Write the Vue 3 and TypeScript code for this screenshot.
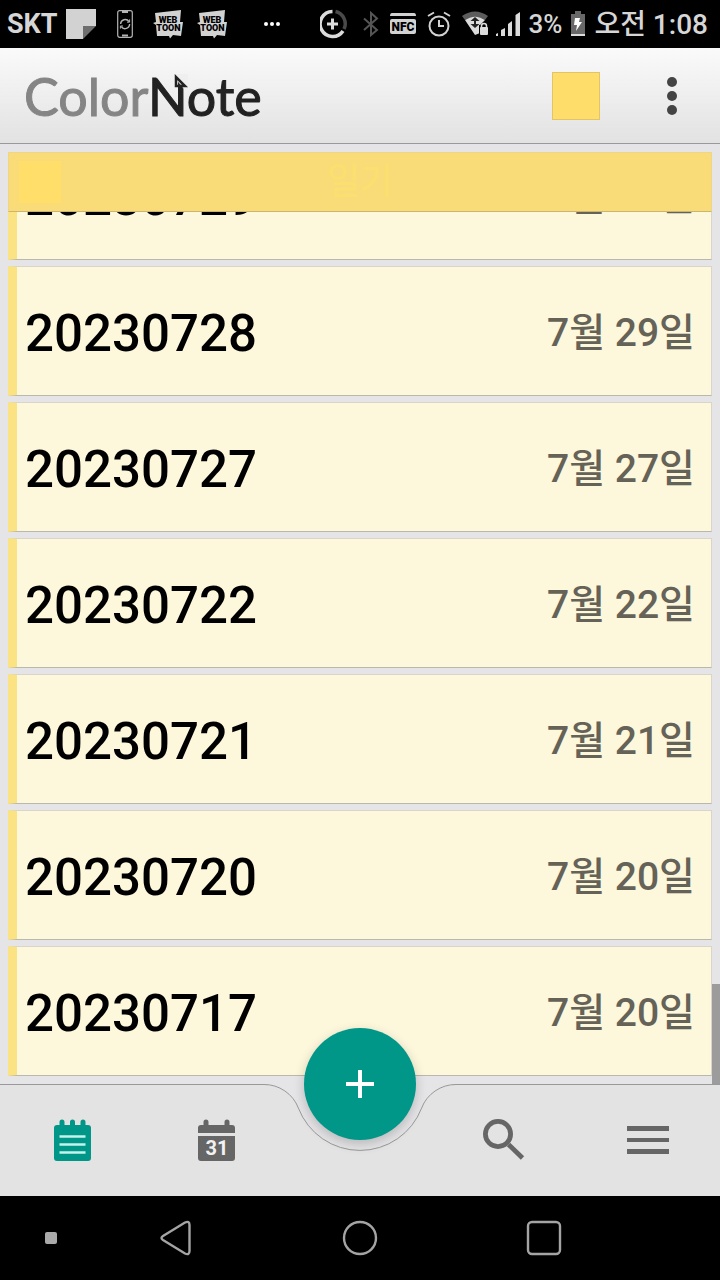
<script setup lang="ts">
interface Note {
  title: string
  date: string
}

const carrier = 'SKT'
const battery = '3%'
const clock = '오전 1:08'
const category = '일기'

const notes: Note[] = [
  { title: '20230729', date: '7월 31일' },
  { title: '20230728', date: '7월 29일' },
  { title: '20230727', date: '7월 27일' },
  { title: '20230722', date: '7월 22일' },
  { title: '20230721', date: '7월 21일' },
  { title: '20230720', date: '7월 20일' },
  { title: '20230717', date: '7월 20일' },
]
</script>

<template>
  <div class="screen">
    <div class="status">
      <div class="status-left">
        <span class="carrier">{{ carrier }}</span>
        <svg width="30" height="30" viewBox="0 0 30 30" aria-hidden="true">
          <path d="M0 0H30V17H17V30H0Z" fill="#d2d2d2" />
          <path d="M17 17H30L17 30Z" fill="#6e6e6e" />
        </svg>
        <svg class="phone" width="16" height="28" viewBox="0 0 16 28" fill="none" stroke="#b4b4b4" aria-hidden="true">
          <rect x="0.7" y="0.7" width="14.6" height="26.6" rx="2" stroke-width="1.2" />
          <path d="M5 2H11M5 25.5H11" stroke-width="1.8" />
          <path d="M3.6 14A4.6 4.6 0 0 1 12 11.6M12.6 14A4.6 4.6 0 0 1 4.2 16.6" stroke-width="1.4" />
          <path d="M12.6 9.4V12.2H10M3.4 18.6V16H6" stroke-width="1" />
        </svg>
        <svg v-for="n in 2" :key="n" class="webtoon" width="30" height="30" viewBox="0 0 30 30" aria-hidden="true">
          <path d="M2 4L28 1L27 13L30 13L28 27L20 26L17 29.500L16 27L4 27L3 16L0 14L3 13Z" fill="#d2d2d2" />
          <text x="15" y="14" class="toon-text">WEB</text>
          <text x="15.500" y="22" class="toon-text">TOON</text>
        </svg>
        <svg class="dots" width="18" height="6" viewBox="0 0 18 6" fill="#fff" aria-hidden="true">
          <circle cx="3" cy="3" r="2" /><circle cx="9" cy="3" r="2" /><circle cx="15" cy="3" r="2" />
        </svg>
      </div>
      <div class="status-right">
        <svg width="32" height="30" viewBox="0 0 32 30" fill="none" aria-hidden="true">
          <path d="M15.500 2.500A12.500 12.500 0 0 1 24 20" stroke="#4a4a4a" stroke-width="3.500" />
          <path d="M12.500 2.500A12.500 12.500 0 1 0 23 22" stroke="#dcdcdc" stroke-width="3.500" />
          <path d="M12.500 9.500V20.500M7 15H18" stroke="#dcdcdc" stroke-width="3" />
        </svg>
        <svg width="16" height="26" viewBox="0 0 16 26" fill="none" stroke="#555" stroke-width="2" aria-hidden="true">
          <path d="M1 7.500L14 19L8 24V2L14 7.500L1 19" />
        </svg>
        <svg width="26" height="22" viewBox="0 0 26 22" aria-hidden="true">
          <path d="M2 0H24Q26 0 26 3H0Q0 0 2 0Z" fill="#d2d2d2" />
          <rect y="6" width="26" height="15" rx="2" fill="#d2d2d2" />
          <text x="13" y="18" class="nfc-text">NFC</text>
        </svg>
        <svg width="24" height="26" viewBox="0 0 24 26" fill="none" stroke="#d2d2d2" stroke-width="2" aria-hidden="true">
          <circle cx="12" cy="15" r="9.500" />
          <path d="M12 9V15H17M1 5L7 1.500M23 5L17 1.500" />
        </svg>
        <div class="signals">
          <svg width="26" height="26" viewBox="0 0 26 26" aria-hidden="true">
            <path d="M0 5Q13 -4 26 5L23 9Q13 2 3 9Z" fill="#5c5c5c" />
            <path d="M3 9Q13 2 23 9L18 14V22L13 24Z" fill="#dcdcdc" />
            <path d="M8.500 10L13 6L17.500 10H14V13H17.500L13 17L8.500 13H12V10Z" fill="#222" />
            <path d="M17 14H26V26H17Z" fill="#000" />
            <rect x="18" y="16" width="8" height="8" rx="1" fill="#dcdcdc" />
            <path d="M19.500 17V15Q19.500 12.500 22 12.500T24.500 15V17" fill="none" stroke="#dcdcdc" stroke-width="1.500" />
          </svg>
          <svg width="24" height="24" viewBox="0 0 24 24" fill="#dcdcdc" aria-hidden="true">
            <path d="M0 24V22L2 21V24ZM5 24V18L9 16V24ZM12 24V12L16 9V24ZM19.500 24V3L24 0V24Z" />
          </svg>
          <span class="percent">{{ battery }}</span>
          <svg width="16" height="26" viewBox="0 0 16 26" aria-hidden="true">
            <path d="M5 0H11V3H15V23H1V3H5Z" fill="#686868" />
            <rect x="1" y="23" width="14" height="2" fill="#ddd" />
            <path d="M5 7H10L9 11H12L6 20L7 14H4Z" fill="#fff" />
          </svg>
          <span class="clock">{{ clock }}</span>
        </div>
      </div>
    </div>

    <header class="toolbar">
      <h1 class="logo">
        <span class="color">Color</span><span class="note">Note</span>
        <svg class="fold" width="14" height="16" viewBox="0 0 14 16" aria-hidden="true">
          <path d="M0 0H14V15H10L0 3Z" fill="#efefef" />
          <path d="M2 3V12H11Z" fill="none" stroke="#222" stroke-width="2.500" />
        </svg>
      </h1>
      <button class="swatch" type="button" aria-label="Color"></button>
      <button class="more" type="button" aria-label="More options">
        <svg width="12" height="40" viewBox="0 0 12 40" fill="#444" aria-hidden="true">
          <circle cx="6" cy="6" r="5" /><circle cx="6" cy="20" r="5" /><circle cx="6" cy="34" r="5" />
        </svg>
      </button>
    </header>

    <main class="content">
      <h2 class="category"><span class="chip"></span><span class="category-name">{{ category }}</span></h2>
      <ul class="notes">
        <li v-for="note in notes" :key="note.title">
          <button class="row" type="button">
            <span class="title">{{ note.title }}</span>
            <span class="date">{{ note.date }}</span>
          </button>
        </li>
      </ul>
      <div class="thumb"></div>
    </main>

    <nav class="tabs">
      <svg class="notch" width="192" height="68" viewBox="0 0 192 68" aria-hidden="true">
        <path d="M0 0V0.500A36.800 36.800 0 0 1 34.400 24.100A66 66 0 0 0 157.600 24.100A36.800 36.800 0 0 1 192 0.500V0Z" fill="#e5e5e7" />
        <path d="M0 0.500A36.800 36.800 0 0 1 34.400 24.100A66 66 0 0 0 157.600 24.100A36.800 36.800 0 0 1 192 0.500" fill="none" stroke="#999" />
      </svg>
      <button type="button" aria-label="Notes">
        <svg width="38" height="44" viewBox="-1 -1 38 44" aria-hidden="true">
          <rect y="6" width="37" height="36" rx="3" fill="#009688" />
          <path d="M8 3V9M18.500 3V9M29 3V9" stroke="#009688" stroke-width="5" stroke-linecap="round" />
          <path d="M5.500 17.500H31.500M5.500 25.500H31.500M5.500 33.500H31.500" stroke="#c4f3ed" stroke-width="2.600" />
        </svg>
      </button>
      <button type="button" aria-label="Calendar">
        <svg width="38" height="44" viewBox="-1 -1 38 44" aria-hidden="true">
          <path d="M0 14V9Q0 6 3 6H34Q37 6 37 9V14ZM0 17H37V39Q37 42 34 42H3Q0 42 0 39Z" fill="#666" />
          <path d="M8 3V9M29 3V9" stroke="#666" stroke-width="5" stroke-linecap="round" />
          <text x="19" y="36" class="day-text">31</text>
        </svg>
      </button>
      <button class="fab" type="button" aria-label="Add note">
        <svg width="28" height="28" viewBox="0 0 28 28" stroke="#fff" stroke-width="4" aria-hidden="true">
          <path d="M14 0V28M0 14H28" />
        </svg>
      </button>
      <button type="button" aria-label="Search">
        <svg width="42" height="42" viewBox="0 0 42 42" fill="none" stroke="#666" aria-hidden="true">
          <circle cx="15" cy="15" r="12.600" stroke-width="4.800" />
          <path d="M25.500 25.500L39.500 39" stroke-width="4.800" />
        </svg>
      </button>
      <button type="button" aria-label="Menu">
        <svg width="42" height="28" viewBox="0 0 42 28" fill="#666" aria-hidden="true">
          <path d="M0 0H42V5H0ZM0 12H42V16H0ZM0 23H42V28H0Z" />
        </svg>
      </button>
    </nav>

    <nav class="system">
      <button class="pin" type="button" aria-label="Hide bar"><span class="pin-dot"></span></button>
      <button type="button" aria-label="Back">
        <svg width="32" height="36" viewBox="0 0 32 36" fill="none" stroke="#a4a4a4" stroke-width="2.400" aria-hidden="true">
          <path d="M3 16L25 2.500Q29.500 0.500 29.500 5V31Q29.500 35.500 25 33.500L3 20Q0 18 3 16Z" />
        </svg>
      </button>
      <button type="button" aria-label="Home">
        <svg width="36" height="36" viewBox="0 0 36 36" fill="none" stroke="#a4a4a4" stroke-width="2.400" aria-hidden="true">
          <circle cx="18" cy="18" r="16" />
        </svg>
      </button>
      <button type="button" aria-label="Recent apps">
        <svg width="36" height="36" viewBox="0 0 36 36" fill="none" stroke="#a4a4a4" stroke-width="2.400" aria-hidden="true">
          <rect x="2" y="2" width="32" height="32" rx="4" />
        </svg>
      </button>
    </nav>
  </div>
</template>

<style>
body {
  margin: 0;
  background: #000;
}
</style>

<style scoped>
.screen {
  display: flex;
  flex-direction: column;
  height: 100vh;
  background: #e5e5e7;
  font-family: Roboto, "Noto Sans CJK KR", sans-serif;
}
button {
  margin: 0;
  padding: 0;
  border: 0;
  background: none;
  font: inherit;
}
svg {
  display: block;
  flex: none;
}
.status {
  display: flex;
  align-items: center;
  justify-content: space-between;
  height: 48px;
  padding: 0 12px 0 7px;
  box-sizing: border-box;
  background: #000;
  color: #d6d6d6;
  white-space: nowrap;
}
.status-left,
.status-right,
.signals {
  display: flex;
  align-items: center;
}
.status-right {
  gap: 11px;
}
.signals {
  gap: 8px;
}
.carrier {
  margin-right: 8px;
  font-size: 27px;
  font-weight: 700;
}
.phone {
  margin: 0 6px 0 21px;
}
.webtoon {
  margin-left: 14px;
}
.dots {
  margin-left: 36px;
}
.toon-text {
  font: 900 9px Roboto, sans-serif;
  text-anchor: middle;
  fill: #000;
}
.nfc-text {
  font: 900 12px Roboto, sans-serif;
  text-anchor: middle;
  fill: #000;
}
.percent {
  font-size: 26px;
  font-weight: 500;
}
.clock {
  padding-top: 2px;
  font-size: 28px;
  font-weight: 500;
  line-height: 46px;
}
.toolbar {
  display: flex;
  align-items: center;
  height: 96px;
  padding: 0 24px;
  box-sizing: border-box;
  border-bottom: 1px solid #999;
  background: linear-gradient(#fafafa, #e2e2e2);
}
.logo {
  position: relative;
  margin: 0 auto 0 0;
  font: 400 52px/62px Lato, sans-serif;
  -webkit-text-stroke: 1px currentColor;
}
.color {
  color: #858585;
}
.note {
  color: #222;
}
.fold {
  position: absolute;
  top: 9px;
  left: 150px;
}
.swatch {
  width: 48px;
  height: 48px;
  border: 1px solid #e0c568;
  background: #ffdd6b;
}
.more {
  display: grid;
  place-items: center;
  width: 48px;
  height: 48px;
  margin-left: 48px;
}
.content {
  position: relative;
  display: flex;
  flex: 1;
  flex-direction: column;
  min-height: 0;
  padding: 8px 8px 0;
}
.category {
  display: grid;
  grid-template-columns: 42px 1fr 42px;
  align-items: center;
  flex: none;
  height: 60px;
  margin: 0;
  padding: 0 10px;
  box-sizing: border-box;
  border: 1px solid #ecd68a;
  border-bottom-color: #cbb573;
  background: #f9dc78;
}
.chip {
  height: 42px;
  background: #ffdf6a;
}
.category-name {
  color: #fbdf70;
  font-size: 36px;
  font-weight: 500;
  line-height: 48px;
  text-align: center;
}
.notes {
  display: flex;
  flex: 1;
  flex-direction: column;
  justify-content: flex-end;
  gap: 6px;
  min-height: 0;
  margin: 0;
  padding: 0 0 8px;
  overflow: hidden;
  list-style: none;
}
.row {
  display: flex;
  align-items: center;
  justify-content: space-between;
  width: 100%;
  height: 130px;
  padding: 0 16px 0 8px;
  box-sizing: border-box;
  border: 1px solid #d8d6cc;
  border-left: 9px solid #fbe283;
  border-bottom-color: #b9b8ac;
  background: #fdf7dc;
}
.title {
  padding-top: 4px;
  color: #000;
  font-size: 51px;
  font-weight: 500;
}
.date {
  padding-bottom: 4px;
  color: #656257;
  font-size: 39px;
  font-weight: 500;
}
.thumb {
  position: absolute;
  right: 0;
  bottom: 0;
  width: 8px;
  height: 100px;
  background: #9c9c9c;
}
.tabs {
  position: relative;
  display: grid;
  grid-template-columns: repeat(5, 1fr);
  flex: none;
  height: 112px;
  background: #e3e3e3;
  box-shadow: inset 0 1px #999;
}
.tabs button {
  display: grid;
  place-items: center;
}
.notch {
  position: absolute;
  top: 0;
  left: calc(50% - 96px);
}
.tabs .fab {
  position: relative;
  top: -56px;
  justify-self: center;
  width: 112px;
  height: 112px;
  border-radius: 50%;
  background: #009688;
  box-shadow: 0 4px 12px rgba(0, 0, 0, 0.2);
}
.day-text {
  font: 700 20px Roboto, sans-serif;
  text-anchor: middle;
  fill: #f2f2f2;
}
.system {
  display: grid;
  grid-template-columns: 84px repeat(3, 1fr) 84px;
  flex: none;
  height: 84px;
  background: #000;
}
.system button {
  display: grid;
  place-items: center;
}
.system .pin {
  padding-left: 18px;
}
.pin-dot {
  width: 12px;
  height: 12px;
  border-radius: 2px;
  background: #aaa;
}
</style>
